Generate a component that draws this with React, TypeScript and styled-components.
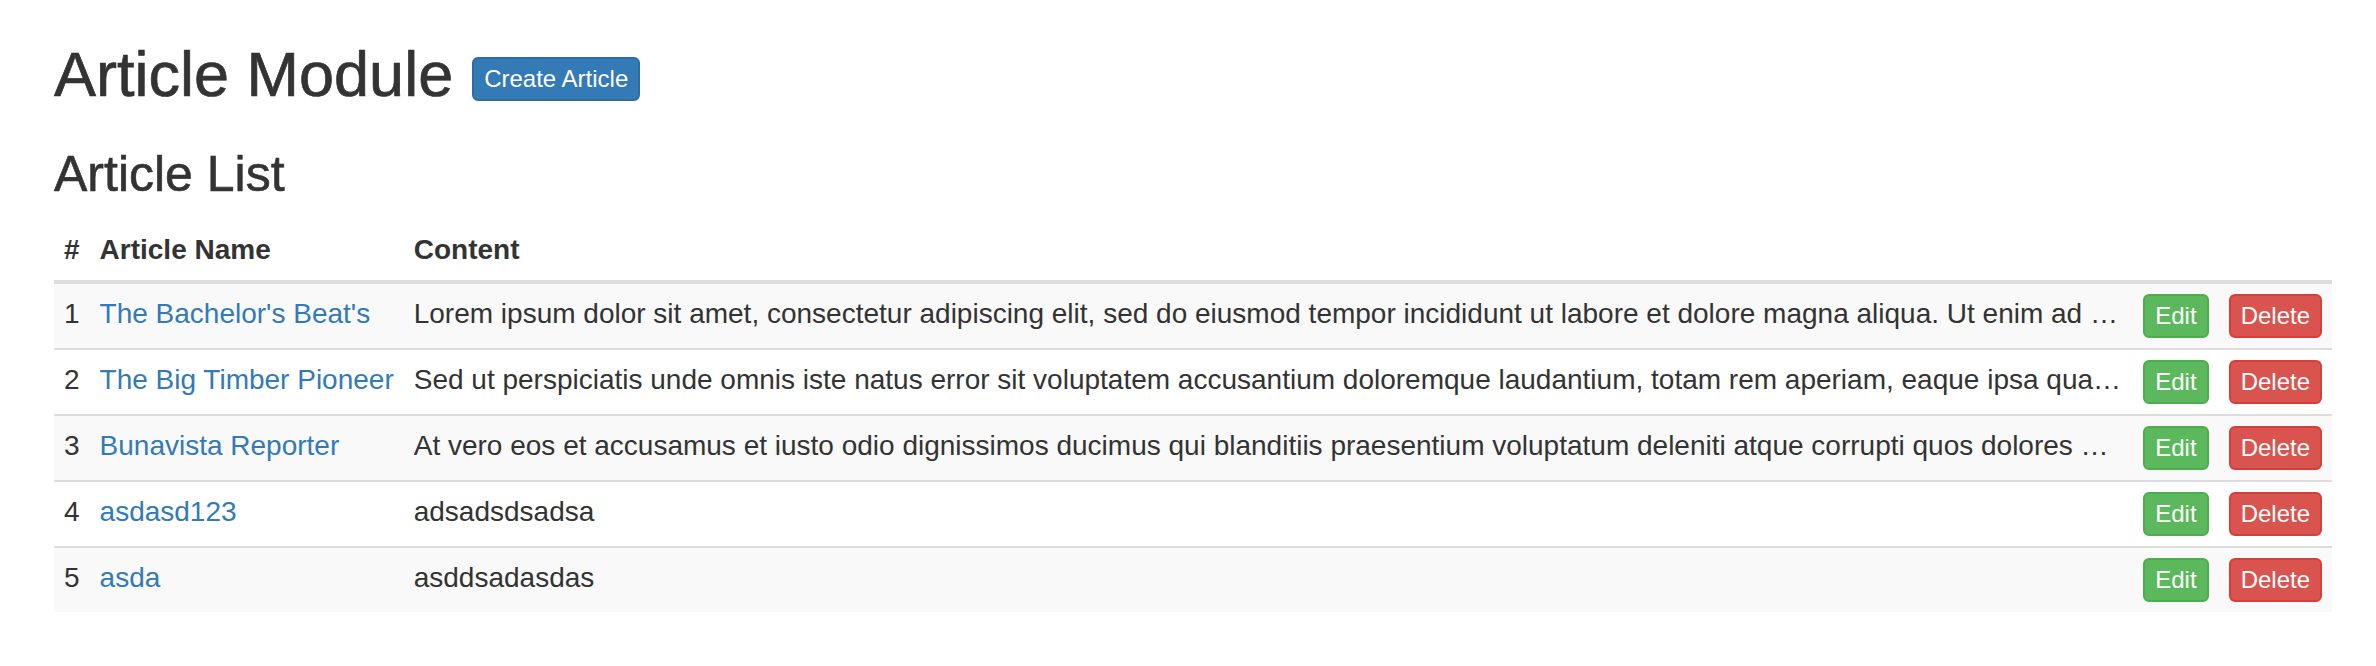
import React from "react";
import styled, { createGlobalStyle } from "styled-components";

const GlobalStyle = createGlobalStyle`
  html, body {
    margin: 0;
    padding: 0;
    background: #fff;
  }
  body {
    font-family: "Liberation Sans", Arial, Helvetica, sans-serif;
    font-size: 28px;
    line-height: 40px;
    color: #333;
  }
  * { box-sizing: border-box; }
`;

const Page = styled.div`
  padding: 0 44px 0 54px;
`;

const TitleBar = styled.div`
  display: flex;
  align-items: flex-start;
  gap: 19px;
  margin-top: 40px;
`;

const Title = styled.h2`
  margin: 0;
  font-size: 63px;
  line-height: 69px;
  font-weight: 500;
  color: #333;
  -webkit-text-stroke: 0.7px #333;
`;

const SubTitle = styled.h3`
  margin: 38px 0 18px;
  font-size: 50px;
  line-height: 55px;
  font-weight: 500;
  color: #333;
  -webkit-text-stroke: 0.6px #333;
`;

type Variant = "primary" | "success" | "danger";

const palette: Record<Variant, { bg: string; border: string }> = {
  primary: { bg: "#337ab7", border: "#2e6da4" },
  success: { bg: "#5cb85c", border: "#4cae4c" },
  danger: { bg: "#d9534f", border: "#d43f3a" },
};

const Button = styled.button<{ $variant: Variant; $offset?: number }>`
  display: block;
  margin: ${(p) => (p.$offset ? `${p.$offset}px` : "0")} 0 0 0;
  padding: 2px 10px;
  font-family: inherit;
  font-size: 24px;
  line-height: 36px;
  color: #fff;
  white-space: nowrap;
  background: ${(p) => palette[p.$variant].bg};
  border: 2px solid ${(p) => palette[p.$variant].border};
  border-radius: 6px;
  cursor: pointer;
`;

const Table = styled.table`
  width: 100%;
  border-collapse: collapse;
  border-spacing: 0;
`;

const Th = styled.th`
  padding: 10px;
  text-align: left;
  vertical-align: bottom;
  font-weight: 700;
  line-height: 40px;
  border-bottom: 4px solid #ddd;
  white-space: nowrap;
`;

const Row = styled.tr<{ $striped: boolean; $first: boolean }>`
  background: ${(p) => (p.$striped ? "#f9f9f9" : "transparent")};
  & > td {
    border-top: ${(p) => (p.$first ? "none" : "2px solid #ddd")};
  }
`;

const Td = styled.td`
  padding: 10px;
  vertical-align: top;
  line-height: 40px;
  white-space: nowrap;
`;

const ContentTd = styled(Td)`
  width: 100%;
  max-width: 0;
`;

const Clip = styled.div`
  overflow: hidden;
  white-space: nowrap;
  text-overflow: ellipsis;
`;

const NameLink = styled.a`
  color: #337ab7;
  text-decoration: none;
`;

const articles = [
  {
    id: 1,
    name: "The Bachelor's Beat's",
    content:
      "Lorem ipsum dolor sit amet, consectetur adipiscing elit, sed do eiusmod tempor incididunt ut labore et dolore magna aliqua. Ut enim ad minim veniam, quis nostrud exercitation ullamco laboris nisi ut aliquip ex ea commodo consequat.",
  },
  {
    id: 2,
    name: "The Big Timber Pioneer",
    content:
      "Sed ut perspiciatis unde omnis iste natus error sit voluptatem accusantium doloremque laudantium, totam rem aperiam, eaque ipsa quae ab illo inventore veritatis et quasi architecto beatae vitae dicta sunt explicabo.",
  },
  {
    id: 3,
    name: "Bunavista Reporter",
    content:
      "At vero eos et accusamus et iusto odio dignissimos ducimus qui blanditiis praesentium voluptatum deleniti atque corrupti quos dolores et quas molestias excepturi sint occaecati cupiditate non provident.",
  },
  { id: 4, name: "asdasd123", content: "adsadsdsadsa" },
  { id: 5, name: "asda", content: "asddsadasdas" },
];

export default function App() {
  return (
    <>
      <GlobalStyle />
      <Page>
        <TitleBar>
          <Title>Article Module</Title>
          <Button $variant="primary" $offset={17}>
            Create Article
          </Button>
        </TitleBar>
        <SubTitle>Article List</SubTitle>
        <Table>
          <thead>
            <tr>
              <Th>#</Th>
              <Th>Article Name</Th>
              <Th>Content</Th>
              <Th />
              <Th />
            </tr>
          </thead>
          <tbody>
            {articles.map((a, i) => (
              <Row key={a.id} $striped={i % 2 === 0} $first={i === 0}>
                <Td>{a.id}</Td>
                <Td>
                  <NameLink href="#">{a.name}</NameLink>
                </Td>
                <ContentTd>
                  <Clip>{a.content}</Clip>
                </ContentTd>
                <Td>
                  <Button $variant="success">Edit</Button>
                </Td>
                <Td>
                  <Button $variant="danger">Delete</Button>
                </Td>
              </Row>
            ))}
          </tbody>
        </Table>
      </Page>
    </>
  );
}
